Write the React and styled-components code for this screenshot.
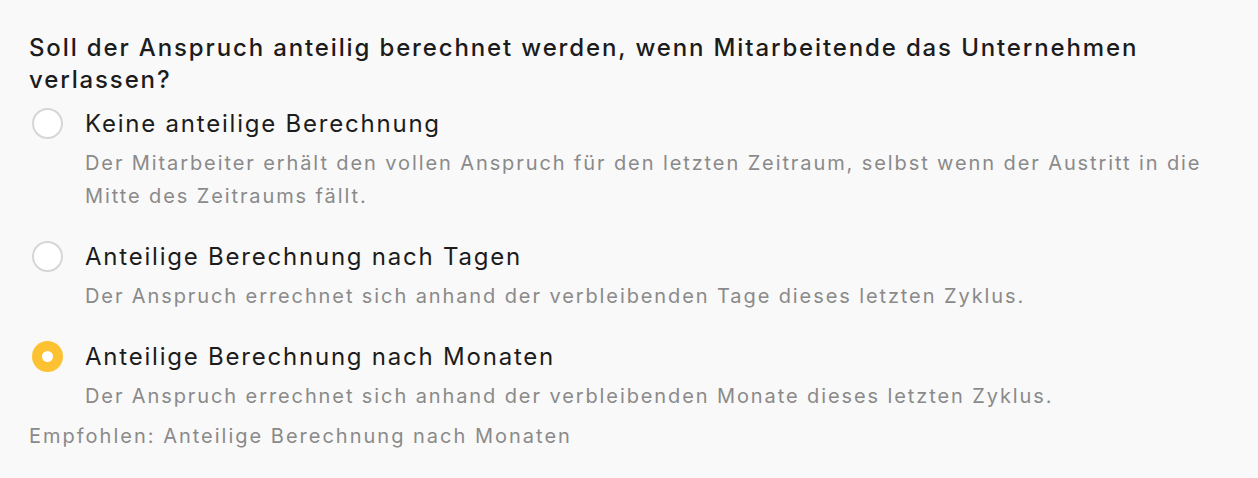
import React, { useState } from "react";
import styled, { createGlobalStyle } from "styled-components";

const GlobalStyle = createGlobalStyle`
  html, body {
    margin: 0;
    background: #f9f9f9;
  }
  body {
    font-family: Inter, "Noto Sans", sans-serif;
    color: #1c1c1c;
  }
`;

const Section = styled.section`
  padding: 32px 29px 0 29px;
  display: flex;
  flex-direction: column;
`;

const Question = styled.h2`
  margin: 0 0 10px 0;
  font-size: 24px;
  line-height: 32px;
  font-weight: 500;
  letter-spacing: 1.86px;
  color: #1c1c1c;
`;

const OptionList = styled.div`
  display: flex;
  flex-direction: column;
  gap: 26px;
`;

const Option = styled.label`
  display: grid;
  grid-template-columns: 31px 1fr;
  column-gap: 22px;
  align-items: start;
  padding-left: 3px;
  cursor: pointer;
`;

const Radio = styled.span`
  width: 31px;
  height: 31px;
  margin-top: 2px;
  box-sizing: border-box;
  border-radius: 50%;
  display: flex;
  align-items: center;
  justify-content: center;
  background: ${(p) => (p.$checked ? "#fcc232" : "#ffffff")};
  border: ${(p) => (p.$checked ? "none" : "2px solid #d6d6d6")};

  &::after {
    content: "";
    display: ${(p) => (p.$checked ? "block" : "none")};
    width: 11px;
    height: 11px;
    border-radius: 50%;
    background: #ffffff;
  }
`;

const Title = styled.div`
  font-size: 24px;
  line-height: 36px;
  letter-spacing: 1.78px;
  color: #1c1c1c;
`;

const Description = styled.div`
  margin-top: 5px;
  font-size: 20px;
  line-height: 33px;
  letter-spacing: 1.9px;
  color: #8a8a8a;
`;

const Hint = styled.div`
  margin-top: 9px;
  font-size: 20px;
  line-height: 28px;
  letter-spacing: 2px;
  color: #8a8a8a;
`;

const options = [
  {
    id: "none",
    title: "Keine anteilige Berechnung",
    text:
      "Der Mitarbeiter erhält den vollen Anspruch für den letzten Zeitraum, selbst wenn der Austritt in die Mitte des Zeitraums fällt.",
  },
  {
    id: "days",
    title: "Anteilige Berechnung nach Tagen",
    text: "Der Anspruch errechnet sich anhand der verbleibenden Tage dieses letzten Zyklus.",
  },
  {
    id: "months",
    title: "Anteilige Berechnung nach Monaten",
    text: "Der Anspruch errechnet sich anhand der verbleibenden Monate dieses letzten Zyklus.",
  },
];

const App = () => {
  const [selected, setSelected] = useState("months");

  return (
    <>
      <GlobalStyle />
      <Section>
        <Question>
          Soll der Anspruch anteilig berechnet werden, wenn Mitarbeitende das Unternehmen
          verlassen?
        </Question>
        <OptionList>
          {options.map((o) => (
            <Option key={o.id} onClick={() => setSelected(o.id)}>
              <Radio $checked={selected === o.id} />
              <div>
                <Title>{o.title}</Title>
                <Description>{o.text}</Description>
              </div>
            </Option>
          ))}
        </OptionList>
        <Hint>Empfohlen: Anteilige Berechnung nach Monaten</Hint>
      </Section>
    </>
  );
};

export default App;
